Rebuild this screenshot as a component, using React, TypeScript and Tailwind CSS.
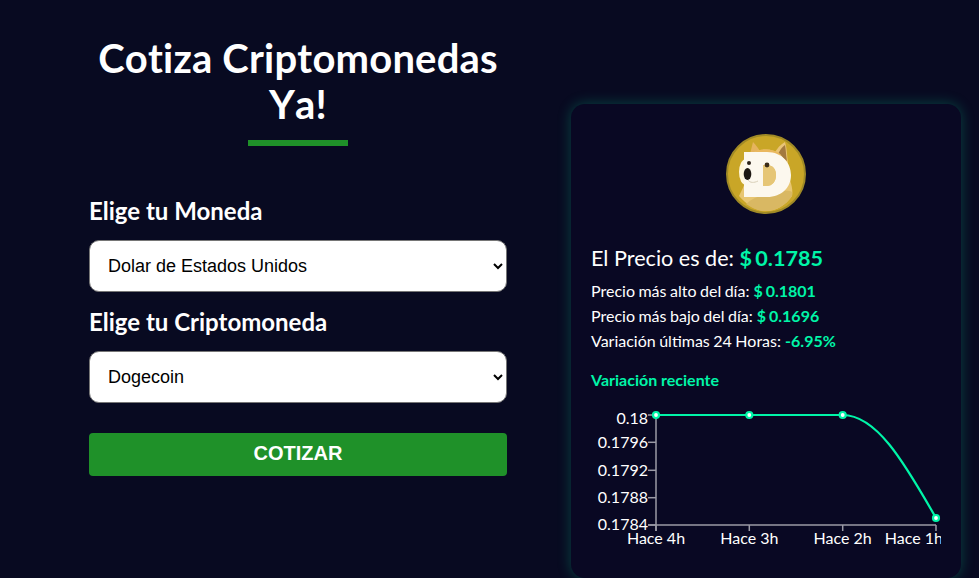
const lato = "[font-family:Lato,sans-serif]";

function DogeLogo() {
  return (
    <svg width="80" height="80" viewBox="0 0 80 80" className="block">
      <circle cx="40" cy="40" r="39" fill="#c9a627" stroke="#a08a26" strokeWidth="2" />
      {/* ears */}
      <path d="M24 20 L27 8 C30 11 33 15 35 19 Z" fill="#e6b45e" />
      <path d="M48 20 C51 14 55 10 59 8 C61 14 61 22 62 30 Z" fill="#e9c477" />
      <path d="M52 20 C54 16 56 13 59 11 C60 16 60 22 61 27 Z" fill="#a3793f" />
      {/* head and body */}
      <path d="M24 20 C34 14 46 14 54 20 C60 26 64 36 64 46 C66 52 67 58 66 62 C60 71 50 77 40 77 C30 77 21 71 13 62 C16 56 18 52 19 48 C14 40 15 28 24 20 Z" fill="#e8c672" />
      <path d="M26 19 C34 14 46 14 54 20 L56 24 L26 24 Z" fill="#eab85e" />
      <path d="M20 70 C28 62 40 60 50 58 C56 57 62 56 66 58 L66 62 C60 71 50 77 40 77 C32 77 26 74 20 70 Z" fill="#d9b863" />
      <ellipse cx="20" cy="38" rx="7" ry="13" fill="#fff6dc" />
      {/* white D */}
      <path
        d="M18 18 H41 C56 18 65 29 65 41 C65 53 56 63 41 63 H18 Z M37 31 V52 H40 C47 52 50 47 50 41 C50 35 47 31 40 31 Z"
        fill="#fcf8ee"
        fillRule="evenodd"
      />
      <path d="M37 31 H40 C47 31 50 35 50 41 C50 47 47 52 40 52 H37 Z" fill="#e6c676" />
      {/* face */}
      <ellipse cx="21.5" cy="40" rx="3.8" ry="6" fill="#1d1711" />
      <path d="M22 46 C24 49 28 49 32 47" fill="none" stroke="#d9d0b8" strokeWidth="1" />
      <circle cx="23" cy="29" r="2" fill="#2a2118" />
      <circle cx="41" cy="31" r="2.4" fill="#3b2c18" />
    </svg>
  );
}

function Chart() {
  const yTicks = [
    { label: "0.18", tick: 10, text: 15 },
    { label: "0.1796", tick: 37.3, text: 38.5 },
    { label: "0.1792", tick: 65.3, text: 66.5 },
    { label: "0.1788", tick: 92.7, text: 93.7 },
    { label: "0.1784", tick: 120, text: 121 },
  ];
  const xTicks = [
    { label: "Hace 4h", x: 65, anchor: "middle" },
    { label: "Hace 3h", x: 158.3, anchor: "middle" },
    { label: "Hace 2h", x: 251.7, anchor: "middle" },
    { label: "Hace 1h", x: 352, anchor: "end" },
  ];
  const points = [
    [65, 10],
    [158.3, 10],
    [251.7, 10],
    [345, 113],
  ];

  return (
    <svg width="350" height="150" viewBox="0 0 350 150" className="block overflow-hidden">
      <g stroke="#9b9aa6" strokeWidth="1.5">
        <line x1="65" y1="10" x2="65" y2="126" />
        <line x1="57" y1="120" x2="345" y2="120" />
        {yTicks.map((t) => (
          <line key={t.label} x1="57" y1={t.tick} x2="65" y2={t.tick} />
        ))}
        {xTicks.map((t, i) => (
          <line key={t.label} x1={points[i][0]} y1="120" x2={points[i][0]} y2="126" />
        ))}
      </g>
      <g fill="#fff" fontSize="16" fontFamily="Lato, sans-serif">
        {yTicks.map((t) => (
          <text key={t.label} x="57" y={t.text} textAnchor="end" dominantBaseline="middle">
            {t.label}
          </text>
        ))}
        {xTicks.map((t) => (
          <text key={t.label} x={t.x} y="135" textAnchor={t.anchor as "middle" | "end"} dominantBaseline="middle">
            {t.label}
          </text>
        ))}
      </g>
      <path
        d="M65 10 L251.7 10 C285 10 312 55 345 113"
        fill="none"
        stroke="#00f5a8"
        strokeWidth="2.2"
      />
      {points.map(([x, y]) => (
        <circle key={x} cx={x} cy={y} r="3" fill="#fff" stroke="#00f5a8" strokeWidth="2.2" />
      ))}
    </svg>
  );
}

export default function App() {
  const rows = [
    { label: "Precio más alto del día:", value: "$ 0.1801" },
    { label: "Precio más bajo del día:", value: "$ 0.1696" },
    { label: "Variación últimas 24 Horas:", value: "-6.95%" },
  ];

  return (
    <div className={`${lato} h-[578px] overflow-hidden bg-[#080a21] text-white flex items-start pl-[89px] gap-16`}>
      {/* Form column */}
      <div className="w-[418px] shrink-0 pt-[35px]">
        <h1 className="text-[40px] leading-[46px] font-bold text-center tracking-[0.18px] [font-kerning:none] [font-variant-ligatures:none]">
          Cotiza Criptomonedas Ya!
        </h1>
        <div className="w-[100px] h-[6px] bg-[#1f9129] mx-auto mt-[13px]" />

        <label className="block text-2xl leading-[29px] font-bold mt-[50px]">Elige tu Moneda</label>
        <select className="block w-full h-[52px] mt-[15px] bg-white text-black text-lg border border-[#767676] rounded-[10px] pl-[14px] [font-family:'Liberation_Sans',Arial,sans-serif]">
          <option>Dolar de Estados Unidos</option>
        </select>

        <label className="block text-2xl leading-[29px] font-bold mt-[15px]">Elige tu Criptomoneda</label>
        <select className="block w-full h-[52px] mt-[15px] bg-white text-black text-lg border border-[#767676] rounded-[10px] pl-[14px] [font-family:'Liberation_Sans',Arial,sans-serif]">
          <option>Dogecoin</option>
        </select>

        <button className="block w-full h-[43px] mt-[30px] pb-1 bg-[#1f9129] rounded-[4px] text-white text-xl font-bold uppercase [font-family:'Liberation_Sans',Arial,sans-serif]">
          Cotizar
        </button>
      </div>

      {/* Result card */}
      <div className="w-[390px] h-[474px] shrink-0 mt-[104px] bg-[#090823] rounded-[14px] px-5 pt-[30px] shadow-[0_0_14px_rgba(0,245,168,0.25)]">
        <div className="flex justify-center">
          <DogeLogo />
        </div>
        <p className="text-[21.6px] leading-[30px] mt-[29px]">
          El Precio es de: <span className="font-bold text-[#00f5a8] [word-spacing:-2px]">$ 0.1785</span>
        </p>
        <div className="mt-[5px]">
          {rows.map((r) => (
            <p key={r.label} className="text-base leading-[25px]">
              <span className="[word-spacing:-0.6px]">{r.label}</span>{" "}
              <span className="font-bold text-[#00f5a8] [word-spacing:-1px]">{r.value}</span>
            </p>
          ))}
        </div>
        <h3 className="text-base leading-[20px] font-bold text-[#00f5a8] mt-[17px]">Variación reciente</h3>
        <div className="mt-[15px]">
          <Chart />
        </div>
      </div>
    </div>
  );
}
